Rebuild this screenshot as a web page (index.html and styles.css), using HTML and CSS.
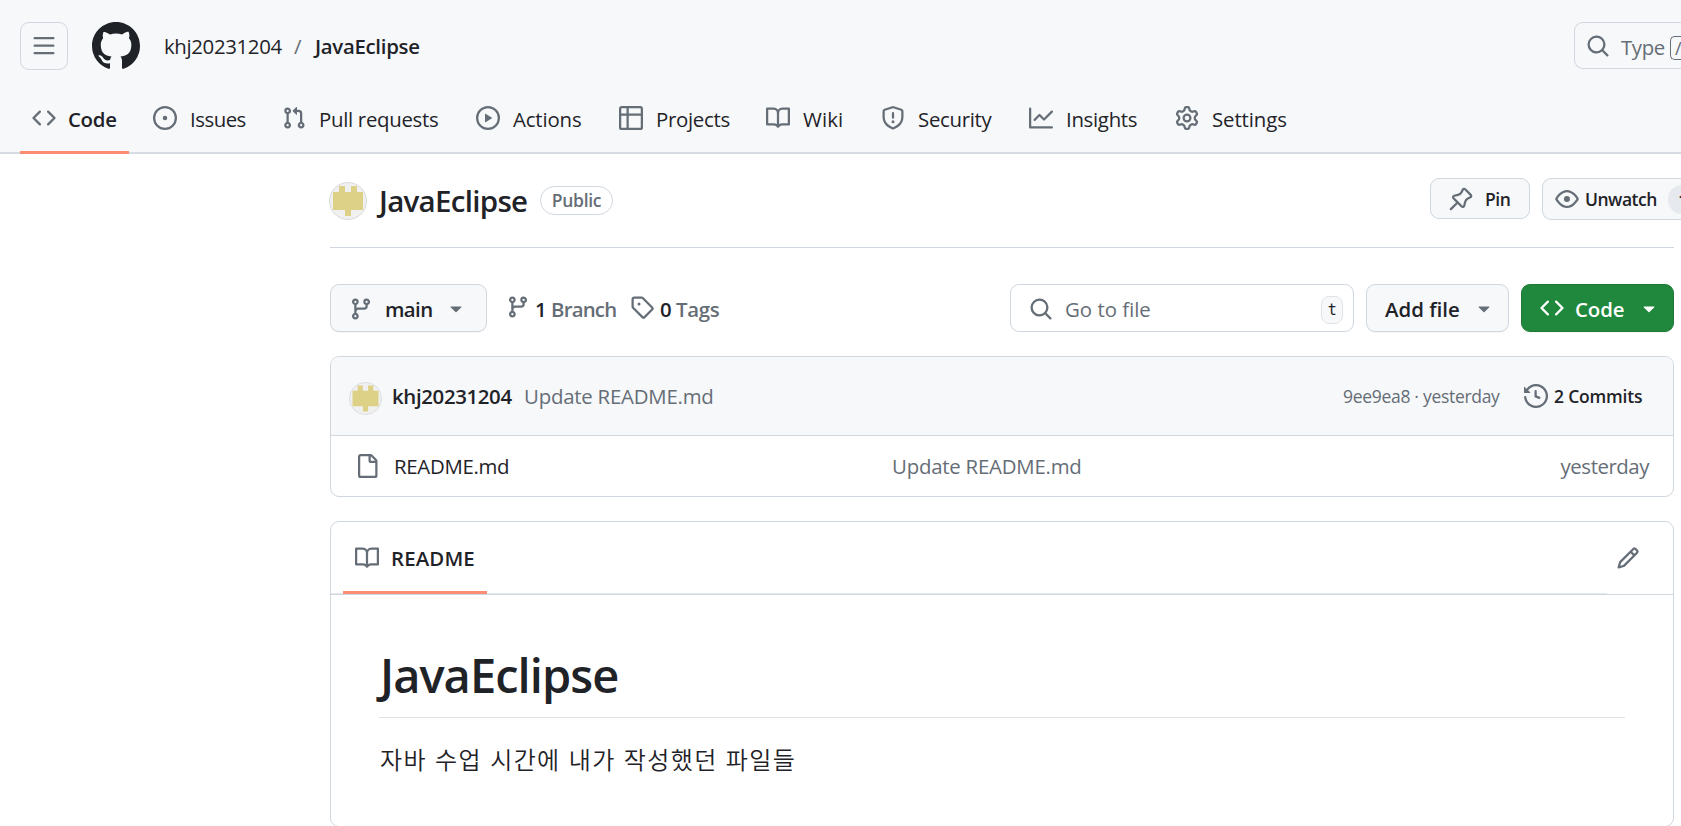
FILE: index.html
```html
<!DOCTYPE html>
<html lang="en">
<head>
<meta charset="utf-8">
<title>khj20231204/JavaEclipse</title>
<link rel="stylesheet" href="styles.css">
</head>
<body>
<svg class="sprite" aria-hidden="true">
  <symbol id="i-bars" viewBox="0 0 16 16"><path d="M1 2.75A.75.75 0 0 1 1.75 2h12.5a.75.75 0 0 1 0 1.5H1.75A.75.75 0 0 1 1 2.75Zm0 5A.75.75 0 0 1 1.75 7h12.5a.75.75 0 0 1 0 1.5H1.75A.75.75 0 0 1 1 7.75ZM1.75 12h12.5a.75.75 0 0 1 0 1.5H1.75a.75.75 0 0 1 0-1.5Z"/></symbol>
  <symbol id="i-mark" viewBox="0 0 16 16"><path d="M8 0c4.42 0 8 3.58 8 8a8.013 8.013 0 0 1-5.45 7.59c-.4.08-.55-.17-.55-.38 0-.27.01-1.13.01-2.2 0-.75-.25-1.23-.54-1.48 1.78-.2 3.65-.88 3.65-3.95 0-.88-.31-1.59-.82-2.15.08-.2.36-1.02-.08-2.12 0 0-.67-.22-2.2.82-.64-.18-1.32-.27-2-.27-.68 0-1.36.09-2 .27-1.53-1.03-2.2-.82-2.2-.82-.44 1.1-.16 1.92-.08 2.12-.51.56-.82 1.28-.82 2.15 0 3.06 1.86 3.75 3.64 3.95-.23.2-.44.55-.51 1.07-.46.21-1.61.55-2.33-.66-.15-.24-.6-.83-1.23-.82-.67.01-.27.38.01.53.34.19.73.9.82 1.13.16.45.68 1.31 2.69.94 0 .67.01 1.3.01 1.49 0 .21-.15.45-.55.38A7.995 7.995 0 0 1 0 8c0-4.42 3.58-8 8-8Z"/></symbol>
  <symbol id="i-code" viewBox="0 0 16 16"><path d="m11.28 3.22 4.25 4.25a.75.75 0 0 1 0 1.06l-4.25 4.25a.749.749 0 0 1-1.275-.326.749.749 0 0 1 .215-.734L13.94 8l-3.72-3.72a.749.749 0 0 1 .326-1.275.749.749 0 0 1 .734.215Zm-6.56 0a.751.751 0 0 1 1.042.018.751.751 0 0 1 .018 1.042L2.06 8l3.72 3.72a.749.749 0 0 1-.326 1.275.749.749 0 0 1-.734-.215L.47 8.53a.75.75 0 0 1 0-1.06Z"/></symbol>
  <symbol id="i-issue" viewBox="0 0 16 16"><path d="M8 9.5a1.5 1.5 0 1 0 0-3 1.5 1.5 0 0 0 0 3Z"/><path d="M8 0a8 8 0 1 1 0 16A8 8 0 0 1 8 0ZM1.5 8a6.5 6.5 0 1 0 13 0 6.5 6.5 0 0 0-13 0Z"/></symbol>
  <symbol id="i-pr" viewBox="0 0 16 16"><path d="M1.5 3.25a2.25 2.25 0 1 1 3 2.122v5.256a2.251 2.251 0 1 1-1.5 0V5.372A2.25 2.25 0 0 1 1.5 3.25Zm5.677-.177L9.573.677A.25.25 0 0 1 10 .854V2.5h1A2.5 2.5 0 0 1 13.5 5v5.628a2.251 2.251 0 1 1-1.5 0V5a1 1 0 0 0-1-1h-1v1.646a.25.25 0 0 1-.427.177L7.177 3.427a.25.25 0 0 1 0-.354ZM3.75 2.5a.75.75 0 1 0 0 1.5.75.75 0 0 0 0-1.5Zm0 9.5a.75.75 0 1 0 0 1.5.75.75 0 0 0 0-1.5Zm8.25.75a.75.75 0 1 0 1.5 0 .75.75 0 0 0-1.5 0Z"/></symbol>
  <symbol id="i-play" viewBox="0 0 16 16"><path d="M8 0a8 8 0 1 1 0 16A8 8 0 0 1 8 0ZM1.5 8a6.5 6.5 0 1 0 13 0 6.5 6.5 0 0 0-13 0Zm4.879-2.773 4.264 2.559a.25.25 0 0 1 0 .428l-4.264 2.559A.25.25 0 0 1 6 10.559V5.442a.25.25 0 0 1 .379-.215Z"/></symbol>
  <symbol id="i-table" viewBox="0 0 16 16"><path d="M0 1.75C0 .784.784 0 1.75 0h12.5C15.216 0 16 .784 16 1.75v12.5A1.75 1.75 0 0 1 14.25 16H1.75A1.75 1.75 0 0 1 0 14.25ZM6.5 6.5v8h7.75a.25.25 0 0 0 .25-.25V6.5Zm8-1.5V1.75a.25.25 0 0 0-.25-.25H6.5V5Zm-13 1.5v7.75c0 .138.112.25.25.25H5v-8ZM5 5V1.5H1.75a.25.25 0 0 0-.25.25V5Z"/></symbol>
  <symbol id="i-book" viewBox="0 0 16 16"><path d="M0 1.75A.75.75 0 0 1 .75 1h4.253c1.227 0 2.317.59 3 1.501A3.743 3.743 0 0 1 11.006 1h4.245a.75.75 0 0 1 .75.75v10.5a.75.75 0 0 1-.75.75h-4.507a2.25 2.25 0 0 0-1.591.659l-.622.621a.75.75 0 0 1-1.06 0l-.622-.621A2.25 2.25 0 0 0 5.258 13H.75a.75.75 0 0 1-.75-.75Zm7.251 10.324.004-5.073-.002-2.253A2.25 2.25 0 0 0 5.003 2.5H1.5v9h3.757a3.75 3.75 0 0 1 1.994.574ZM8.755 4.75l-.004 7.322a3.752 3.752 0 0 1 1.992-.572H14.5v-9h-3.495a2.25 2.25 0 0 0-2.25 2.25Z"/></symbol>
  <symbol id="i-shield" viewBox="0 0 16 16"><path d="M7.467.133a1.748 1.748 0 0 1 1.066 0l5.25 1.68A1.75 1.75 0 0 1 15 3.48V7c0 1.566-.32 3.182-1.303 4.682-.983 1.498-2.585 2.813-5.032 3.855a1.697 1.697 0 0 1-1.33 0c-2.447-1.042-4.049-2.357-5.032-3.855C1.32 10.182 1 8.566 1 7V3.48a1.75 1.75 0 0 1 1.217-1.667Zm.61 1.429a.25.25 0 0 0-.153 0l-5.25 1.68a.25.25 0 0 0-.174.238V7c0 1.358.275 2.666 1.057 3.86.784 1.194 2.121 2.34 4.366 3.297a.196.196 0 0 0 .154 0c2.245-.956 3.582-2.104 4.366-3.298C13.225 9.666 13.5 8.36 13.5 7V3.48a.251.251 0 0 0-.174-.237l-5.25-1.68ZM8.75 4.75v3a.75.75 0 0 1-1.5 0v-3a.75.75 0 0 1 1.5 0ZM9 10.5a1 1 0 1 1-2 0 1 1 0 0 1 2 0Z"/></symbol>
  <symbol id="i-graph" viewBox="0 0 16 16"><path d="M1.5 1.75V13.5h13.75a.75.75 0 0 1 0 1.5H.75a.75.75 0 0 1-.75-.75V1.75a.75.75 0 0 1 1.5 0Zm14.28 2.53-5.25 5.25a.75.75 0 0 1-1.06 0L7 7.06 4.28 9.78a.751.751 0 0 1-1.042-.018.751.751 0 0 1-.018-1.042l3.25-3.25a.75.75 0 0 1 1.06 0L10 7.94l4.72-4.72a.751.751 0 0 1 1.042.018.751.751 0 0 1 .018 1.042Z"/></symbol>
  <symbol id="i-gear" viewBox="0 0 16 16"><path d="M8 0a8.2 8.2 0 0 1 .701.031C9.444.095 9.99.645 10.16 1.29l.288 1.107c.018.066.079.158.212.224.231.114.454.243.668.386.123.082.233.09.299.071l1.103-.303c.644-.176 1.392.021 1.82.63.27.385.506.792.704 1.218.315.675.111 1.422-.364 1.891l-.814.806c-.049.048-.098.147-.088.294.016.257.016.515 0 .772-.01.147.038.246.088.294l.814.806c.475.469.679 1.216.364 1.891a7.977 7.977 0 0 1-.704 1.217c-.428.61-1.176.807-1.82.63l-1.102-.302c-.067-.019-.177-.011-.3.071a5.909 5.909 0 0 1-.668.386c-.133.066-.194.158-.211.224l-.29 1.106c-.168.646-.715 1.196-1.458 1.26a8.006 8.006 0 0 1-1.402 0c-.743-.064-1.289-.614-1.458-1.26l-.289-1.106c-.018-.066-.079-.158-.212-.224a5.738 5.738 0 0 1-.668-.386c-.123-.082-.233-.09-.299-.071l-1.103.303c-.644.176-1.392-.021-1.82-.63a8.12 8.12 0 0 1-.704-1.218c-.315-.675-.111-1.422.363-1.891l.815-.806c.05-.048.098-.147.088-.294a6.214 6.214 0 0 1 0-.772c.01-.147-.038-.246-.088-.294l-.815-.806C.635 6.045.431 5.298.746 4.623a7.92 7.92 0 0 1 .704-1.217c.428-.61 1.176-.807 1.82-.63l1.102.302c.067.019.177.011.3-.071.214-.143.437-.272.668-.386.133-.066.194-.158.211-.224l.29-1.106C6.009.645 6.556.095 7.299.03 7.53.01 7.764 0 8 0Zm-.571 1.525c-.036.003-.108.036-.137.146l-.289 1.105c-.147.561-.549.967-.998 1.189-.173.086-.34.183-.5.29-.417.278-.97.423-1.529.27l-1.103-.303c-.109-.03-.175.016-.195.045-.22.312-.412.644-.573.99-.014.031-.021.11.059.19l.815.806c.411.406.562.957.53 1.456a4.709 4.709 0 0 0 0 .582c.032.499-.119 1.05-.53 1.456l-.815.806c-.081.08-.073.159-.059.19.162.346.353.677.573.989.02.03.085.076.195.046l1.102-.303c.56-.153 1.113-.008 1.53.27.161.107.328.204.501.29.447.222.85.629.997 1.189l.289 1.105c.029.109.101.143.137.146a6.6 6.6 0 0 0 1.142 0c.036-.003.108-.036.137-.146l.289-1.105c.147-.561.549-.967.998-1.189.173-.086.34-.183.5-.29.417-.278.97-.423 1.529-.27l1.103.303c.109.029.175-.016.195-.045.22-.313.411-.644.573-.99.014-.031.021-.11-.059-.19l-.815-.806c-.411-.406-.562-.957-.53-1.456a4.709 4.709 0 0 0 0-.582c-.032-.499.119-1.05.53-1.456l.815-.806c.081-.08.073-.159.059-.19a6.464 6.464 0 0 0-.573-.989c-.02-.03-.085-.076-.195-.046l-1.102.303c-.56.153-1.113.008-1.53-.27a4.44 4.44 0 0 0-.501-.29c-.447-.222-.85-.629-.997-1.189l-.289-1.105c-.029-.11-.101-.143-.137-.146a6.6 6.6 0 0 0-1.142 0ZM11 8a3 3 0 1 1-6 0 3 3 0 0 1 6 0ZM9.5 8a1.5 1.5 0 1 0-3.001.001A1.5 1.5 0 0 0 9.5 8Z"/></symbol>
  <symbol id="i-search" viewBox="0 0 16 16"><path d="M10.68 11.74a6 6 0 0 1-7.922-8.982 6 6 0 0 1 8.982 7.922l3.04 3.04a.749.749 0 0 1-.326 1.275.749.749 0 0 1-.734-.215ZM11.5 7a4.499 4.499 0 1 0-8.997 0A4.499 4.499 0 0 0 11.5 7Z"/></symbol>
  <symbol id="i-pin" viewBox="0 0 16 16"><path d="m11.294.984 3.722 3.722a1.75 1.75 0 0 1-.504 2.826l-1.327.613a3.089 3.089 0 0 0-1.707 2.084l-.584 2.454c-.317 1.332-1.972 1.8-2.94.832L5.75 11.311 1.78 15.28a.749.749 0 1 1-1.06-1.06l3.969-3.97-2.204-2.204c-.968-.968-.5-2.623.832-2.94l2.454-.584a3.08 3.08 0 0 0 2.084-1.707l.613-1.327a1.75 1.75 0 0 1 2.826-.504ZM6.283 9.723l2.732 2.731a.25.25 0 0 0 .42-.119l.584-2.454a4.586 4.586 0 0 1 2.537-3.098l1.328-.613a.25.25 0 0 0 .072-.404l-3.722-3.722a.25.25 0 0 0-.404.072l-.613 1.328a4.584 4.584 0 0 1-3.098 2.537l-2.454.584a.25.25 0 0 0-.119.42l2.731 2.732Z"/></symbol>
  <symbol id="i-eye" viewBox="0 0 16 16"><path d="M8 2c1.981 0 3.671.992 4.933 2.078 1.27 1.091 2.187 2.345 2.637 3.023a1.62 1.62 0 0 1 0 1.798c-.45.678-1.367 1.932-2.637 3.023C11.67 13.008 9.981 14 8 14c-1.981 0-3.671-.992-4.933-2.078C1.797 10.83.88 9.576.43 8.898a1.62 1.62 0 0 1 0-1.798c.45-.677 1.367-1.931 2.637-3.022C4.33 2.992 6.019 2 8 2ZM1.679 7.932a.12.12 0 0 0 0 .136c.411.622 1.241 1.75 2.366 2.717C5.176 11.758 6.527 12.5 8 12.5c1.473 0 2.825-.742 3.955-1.715 1.124-.967 1.954-2.096 2.366-2.717a.12.12 0 0 0 0-.136c-.412-.621-1.242-1.75-2.366-2.717C10.824 4.242 9.473 3.5 8 3.5c-1.473 0-2.825.742-3.955 1.715-1.124.967-1.954 2.096-2.366 2.717ZM8 10a2 2 0 1 1-.001-3.999A2 2 0 0 1 8 10Z"/></symbol>
  <symbol id="i-branch" viewBox="0 0 16 16"><path d="M9.5 3.25a2.25 2.25 0 1 1 3 2.122V6A2.5 2.5 0 0 1 10 8.5H6a1 1 0 0 0-1 1v1.128a2.251 2.251 0 1 1-1.5 0V5.372a2.25 2.25 0 1 1 1.5 0v1.836A2.493 2.493 0 0 1 6 7h4a1 1 0 0 0 1-1v-.628A2.25 2.25 0 0 1 9.5 3.25Zm-6 0a.75.75 0 1 0 1.5 0 .75.75 0 0 0-1.5 0Zm8.25-.75a.75.75 0 1 0 0 1.5.75.75 0 0 0 0-1.5ZM4.25 12a.75.75 0 1 0 0 1.5.75.75 0 0 0 0-1.5Z"/></symbol>
  <symbol id="i-tag" viewBox="0 0 16 16"><path d="M1 7.775V2.75C1 1.784 1.784 1 2.75 1h5.025c.464 0 .91.184 1.238.513l6.25 6.25a1.75 1.75 0 0 1 0 2.474l-5.026 5.026a1.75 1.75 0 0 1-2.474 0l-6.25-6.25A1.752 1.752 0 0 1 1 7.775Zm1.5 0c0 .066.026.13.073.177l6.25 6.25a.25.25 0 0 0 .354 0l5.025-5.025a.25.25 0 0 0 0-.354l-6.25-6.25a.25.25 0 0 0-.177-.073H2.75a.25.25 0 0 0-.25.25ZM6 5a1 1 0 1 1 0 2 1 1 0 0 1 0-2Z"/></symbol>
  <symbol id="i-caret" viewBox="0 0 16 16"><path d="m4.427 7.427 3.396 3.396a.25.25 0 0 0 .354 0l3.396-3.396A.25.25 0 0 0 11.396 7H4.604a.25.25 0 0 0-.177.427Z"/></symbol>
  <symbol id="i-history" viewBox="0 0 16 16"><path d="m.427 1.927 1.215 1.215a8.002 8.002 0 1 1-1.6 5.685.75.75 0 1 1 1.493-.154 6.5 6.5 0 1 0 1.18-4.458l1.358 1.358A.25.25 0 0 1 3.896 6H.25A.25.25 0 0 1 0 5.75V2.104a.25.25 0 0 1 .427-.177ZM7.75 4a.75.75 0 0 1 .75.75v2.992l2.028.812a.75.75 0 0 1-.557 1.392l-2.5-1A.751.751 0 0 1 7 8.25v-3.5A.75.75 0 0 1 7.75 4Z"/></symbol>
  <symbol id="i-file" viewBox="0 0 16 16"><path d="M2 1.75C2 .784 2.784 0 3.75 0h6.586c.464 0 .909.184 1.237.513l2.914 2.914c.329.328.513.773.513 1.237v9.586A1.75 1.75 0 0 1 13.25 16h-9.5A1.75 1.75 0 0 1 2 14.25Zm1.75-.25a.25.25 0 0 0-.25.25v12.5c0 .138.112.25.25.25h9.5a.25.25 0 0 0 .25-.25V6h-2.75A1.75 1.75 0 0 1 9 4.25V1.5Zm6.75.062V4.25c0 .138.112.25.25.25h2.688l-.011-.013-2.914-2.914-.013-.011Z"/></symbol>
  <symbol id="i-pencil" viewBox="0 0 16 16"><path d="M11.013 1.427a1.75 1.75 0 0 1 2.474 0l1.086 1.086a1.75 1.75 0 0 1 0 2.474l-8.61 8.61c-.21.21-.47.364-.756.445l-3.251.93a.75.75 0 0 1-.927-.928l.929-3.25c.081-.286.235-.547.445-.758l8.61-8.61Zm.176 4.823L9.75 4.81l-6.286 6.287a.253.253 0 0 0-.064.108l-.558 1.953 1.953-.558a.253.253 0 0 0 .108-.064Zm1.238-3.763a.25.25 0 0 0-.354 0L10.811 3.75l1.439 1.44 1.263-1.263a.25.25 0 0 0 0-.354Z"/></symbol>
  <symbol id="i-avatar" viewBox="0 0 38 38"><circle cx="19" cy="19" r="18.5" fill="#f0f0f0" stroke="#d9dadc"/><path fill="#ddd087" d="M10 4h6v6h6V4h6v6h6v18H22v6h-6v-6H4V10h6Z"/></symbol>
</svg>

<header class="header">
  <div class="topbar">
    <button class="menu-btn"><svg class="icon"><use href="#i-bars"/></svg></button>
    <svg class="logo"><use href="#i-mark"/></svg>
    <div class="crumbs"><span class="crumb-owner">khj20231204</span><span class="crumb-sep">/</span><b class="crumb-repo">JavaEclipse</b></div>
    <div class="global-search"><svg class="icon"><use href="#i-search"/></svg><span class="type">Type</span><kbd>/</kbd></div>
  </div>
  <nav class="tabs">
    <a class="tab active"><svg class="icon"><use href="#i-code"/></svg><span class="w-code">Code</span></a>
    <a class="tab"><svg class="icon"><use href="#i-issue"/></svg><span class="w-issues">Issues</span></a>
    <a class="tab"><svg class="icon"><use href="#i-pr"/></svg><span class="w-pulls">Pull requests</span></a>
    <a class="tab"><svg class="icon"><use href="#i-play"/></svg><span class="w-actions">Actions</span></a>
    <a class="tab"><svg class="icon"><use href="#i-table"/></svg><span class="w-projects">Projects</span></a>
    <a class="tab"><svg class="icon"><use href="#i-book"/></svg><span class="w-wiki">Wiki</span></a>
    <a class="tab"><svg class="icon"><use href="#i-shield"/></svg><span class="w-security">Security</span></a>
    <a class="tab"><svg class="icon"><use href="#i-graph"/></svg><span class="w-insights">Insights</span></a>
    <a class="tab"><svg class="icon"><use href="#i-gear"/></svg><span class="w-settings">Settings</span></a>
  </nav>
</header>

<main class="main">
  <div class="title-row">
    <svg class="avatar-lg"><use href="#i-avatar"/></svg>
    <h2 class="repo-name">JavaEclipse</h2>
    <span class="badge">Public</span>
    <div class="repo-actions">
      <button class="btn-sm pin"><svg class="icon"><use href="#i-pin"/></svg><span>Pin</span></button>
      <button class="btn-sm watch"><svg class="icon"><use href="#i-eye"/></svg><span class="watch-label">Unwatch</span><span class="counter">1</span></button>
    </div>
  </div>

  <div class="toolbar">
    <button class="btn branch-btn"><svg class="icon"><use href="#i-branch"/></svg><span class="w-main">main</span><svg class="icon"><use href="#i-caret"/></svg></button>
    <a class="stat branches"><svg class="icon"><use href="#i-branch"/></svg><b>1</b><span class="w-branch">Branch</span></a>
    <a class="stat tags"><svg class="icon"><use href="#i-tag"/></svg><b>0</b><span class="w-tags">Tags</span></a>
    <div class="file-search"><svg class="icon"><use href="#i-search"/></svg><span class="placeholder">Go to file</span><kbd>t</kbd></div>
    <button class="btn add-btn"><span class="w-add">Add file</span><svg class="icon"><use href="#i-caret"/></svg></button>
    <button class="btn code-btn"><svg class="icon"><use href="#i-code"/></svg><span class="w-codebtn">Code</span><svg class="icon"><use href="#i-caret"/></svg></button>
  </div>

  <section class="box files">
    <div class="commit-row">
      <svg class="avatar-sm"><use href="#i-avatar"/></svg>
      <b class="author">khj20231204</b>
      <span class="message">Update README.md</span>
      <span class="sha">9ee9ea8 · yesterday</span>
      <svg class="icon"><use href="#i-history"/></svg>
      <b class="commits">2 Commits</b>
    </div>
    <div class="file-row">
      <svg class="icon"><use href="#i-file"/></svg>
      <span class="file-name">README.md</span>
      <span class="message">Update README.md</span>
      <span class="age">yesterday</span>
    </div>
  </section>

  <section class="box readme">
    <div class="readme-head">
      <div class="readme-tabs"><a class="readme-tab"><svg class="icon"><use href="#i-book"/></svg><b>README</b></a></div>
      <button class="edit"><svg class="icon"><use href="#i-pencil"/></svg></button>
    </div>
    <article class="article">
      <h1>JavaEclipse</h1>
      <p lang="ko">자바 수업 시간에 내가 작성했던 파일들</p>
    </article>
  </section>
</main>
</body>
</html>
```
FILE: styles.css
```css
* { box-sizing: border-box; }
body {
  margin: 0;
  height: 826px;
  overflow: hidden;
  background: #fff;
  color: #1f2328;
  font: 20.4px/30px "Open Sans", "Noto Sans CJK KR", sans-serif;
  letter-spacing: -0.3px;
  white-space: nowrap;
}
button { font: inherit; letter-spacing: inherit; color: inherit; margin: 0; }
b { font-weight: 600; }
.sprite { display: none; }
.icon { width: 24px; height: 24px; flex: none; fill: #656d76; }

/* Site header */
.header { height: 154px; padding-top: 22px; background: linear-gradient(#f6f8fa 152px, #d6dce2 152px); }
.topbar { display: flex; align-items: center; height: 48px; padding-left: 20px; overflow: hidden; }
.menu-btn { width: 48px; height: 48px; padding: 0; display: grid; place-items: center; background: none; border: 1px solid #d0d7de; border-radius: 9px; }
.logo { width: 48px; height: 48px; margin-left: 24px; fill: #1f2328; flex: none; }
.crumbs { display: flex; margin-left: 24px; flex: none; letter-spacing: -0.35px; }
.crumb-owner { width: 130px; }
.crumb-sep { width: 21px; color: #656d76; }
.crumb-repo { width: 110px; letter-spacing: -0.3px; }
.global-search { display: flex; align-items: center; flex: none; width: 107px; height: 47px; margin: -1px 0 0 auto; padding-left: 11px; border: 1px solid #d0d7de; border-right: 0; border-radius: 9px 0 0 9px; color: #656d76; }
.type { width: 49px; margin-left: 11px; padding-top: 2px; flex: none; letter-spacing: -0.4px; }
.global-search kbd { flex: none; width: 11px; height: 24px; margin-top: 5px; padding-left: 4px; border: 1px solid #656d76; border-right: 0; border-radius: 5px 0 0 5px; font: 18px/22px "Open Sans", sans-serif; }

.tabs { display: flex; gap: 12px; margin-top: 12px; padding-left: 20px; }
.tab { display: flex; align-items: center; gap: 12px; height: 72px; padding: 0 12px; }
.tab span { padding: 1px 0 0 1px; }
.tab.active { font-weight: 600; border-bottom: 3px solid #fd8c73; padding-top: 3px; }
.tabs .w-code { width: 49px; padding-left: 0; }
.w-issues { width: 57px; letter-spacing: -0.5px; }
.w-pulls { width: 122px; }
.w-actions { width: 71px; letter-spacing: -0.15px; }
.w-projects { width: 75px; }
.w-wiki { width: 43px; letter-spacing: 0.1px; }
.w-security { width: 76px; }
.w-insights { width: 74px; }
.w-settings { width: 77px; letter-spacing: -0.1px; }

.main { width: 1344px; margin-left: 330px; }
.title-row { display: flex; align-items: center; height: 94px; border-bottom: 1px solid #d0d7de; }
.avatar-lg { width: 38px; height: 38px; margin-left: -1px; flex: none; }
.repo-name { width: 161px; margin: 0 0 0 12px; font-size: 29.5px; line-height: 40px; font-weight: 600; letter-spacing: -0.7px; }
.badge { width: 73px; height: 29px; border: 1px solid #d0d7de; border-radius: 15px; color: #656d76; font-size: 17.5px; line-height: 27px; font-weight: 600; text-align: center; }
.repo-actions { display: flex; align-items: flex-start; height: 45px; gap: 12px; margin: 0 -7px 0 auto; flex: none; font-size: 17.5px; }
.btn-sm { display: flex; align-items: center; height: 42px; padding: 0; background: #f6f8fa; border: 1px solid #d0d7de; border-radius: 9px; font-weight: 600; letter-spacing: -0.5px; }
.pin { width: 100px; height: 41px; padding-left: 18px; gap: 12px; }
.watch { width: 139px; padding-left: 12px; gap: 6px; border-right: 0; border-radius: 9px 0 0 9px; }
.watch-label { width: 77px; text-align: left; flex: none; }
.counter { flex: none; width: 14px; height: 29px; border-radius: 15px 0 0 15px; background: #e6eaef; text-align: left; padding-left: 10px; overflow: hidden; }

/* Branch and file controls */
.toolbar { display: flex; align-items: center; margin-top: 36px; height: 48px; }
.toolbar span, .toolbar b { padding-top: 2px; }
.btn { display: flex; align-items: center; height: 48px; padding: 0; background: #f6f8fa; border: 1px solid #d0d7de; border-radius: 9px; box-shadow: 0 1px 0 rgba(31, 35, 40, .04); font-weight: 600; }
.branch-btn { width: 157px; padding-left: 18px; gap: 12px; letter-spacing: -0.6px; }
.branch-btn .icon { margin-top: 2px; }
.w-main { width: 47px; text-align: left; }
.branch-btn .icon:last-child { margin: 0; }
.stat { display: flex; align-items: center; color: #656d76; font-weight: 600; }
.stat .icon { margin: -3px 5px 0 0; }
.stat b { width: 16px; color: #1f2328; }
.tags b { width: 17px; padding-left: 1px; }
.branches { margin-left: 19px; width: 124px; }
.w-branch { letter-spacing: -0.8px; }
.file-search { display: flex; align-items: center; width: 344px; height: 48px; margin-left: auto; padding: 0 10px 0 18px; border: 1px solid #d0d7de; border-radius: 9px; color: #656d76; }
.file-search .icon { margin-top: 2px; }
.placeholder { margin-left: 12px; letter-spacing: 0; }
.file-search kbd { width: 22px; height: 28px; margin: 3px 0 0 auto; border: 1px solid #dfe3e8; border-radius: 8px; background: #f6f8fa; color: #1f2328; font: 15px/27px "DejaVu Sans Mono", monospace; text-align: center; }
.add-btn { width: 143px; margin-left: 12px; padding-left: 18px; }
.w-add { width: 87px; text-align: left; letter-spacing: 0; }
.code-btn { width: 153px; margin-left: 12px; padding-left: 18px; background: #1f883d; border-color: #1f7a38; color: #fff; }
.code-btn .icon { fill: #fff; }
.w-codebtn { width: 62px; margin-left: 11px; text-align: left; letter-spacing: -0.1px; }

/* File listing */
.box { border: 1px solid #d0d7de; border-radius: 9px; overflow: hidden; }
.files { margin-top: 24px; height: 141px; }
.commit-row { display: flex; align-items: center; height: 79px; padding-left: 18px; background: #f6f8fa; border-bottom: 1px solid #d0d7de; }
.avatar-sm { width: 33px; height: 33px; margin-top: 4px; flex: none; }
.author { width: 132px; margin-left: 10px; letter-spacing: -0.35px; }
.message { color: #656d76; letter-spacing: -0.22px; }
.sha { margin-left: auto; width: 157px; margin-right: 24px; color: #656d76; font-size: 17.5px; }
.commits { width: 119px; margin-left: 6px; font-size: 17.5px; letter-spacing: -0.2px; }
.file-row { display: flex; align-items: center; height: 60px; padding: 0 24px; }
.file-name { width: 498px; margin-left: 15px; }
.age { margin-left: auto; color: #656d76; letter-spacing: -0.45px; }

/* Rendered readme */
.readme { margin-top: 24px; height: 306px; }
.readme-head { display: flex; height: 73px; border-bottom: 1px solid #d0d7de; }
.readme-tabs { width: 1276px; height: 72px; border-bottom: 1px solid #e4e8ec; padding-left: 12px; }
.readme-tab { display: flex; align-items: center; gap: 12px; width: 144px; height: 72px; padding: 3px 0 0 12px; border-bottom: 3px solid #fd8c73; letter-spacing: 0.15px; }
.edit { display: grid; place-items: center; width: 42px; height: 72px; padding: 0; border: 0; background: none; }
.article { padding: 44px 48px; }
h1 { width: 1246px; height: 79px; margin: 0; padding-left: 1px; font-size: 47px; line-height: 72px; font-weight: 600; letter-spacing: -0.95px; border-bottom: 1px solid #dfe2e6; }
p { margin: 23px 0 0 1px; font: 350 24px/36px "Noto Sans CJK KR", sans-serif; letter-spacing: 1.4px; }
```
